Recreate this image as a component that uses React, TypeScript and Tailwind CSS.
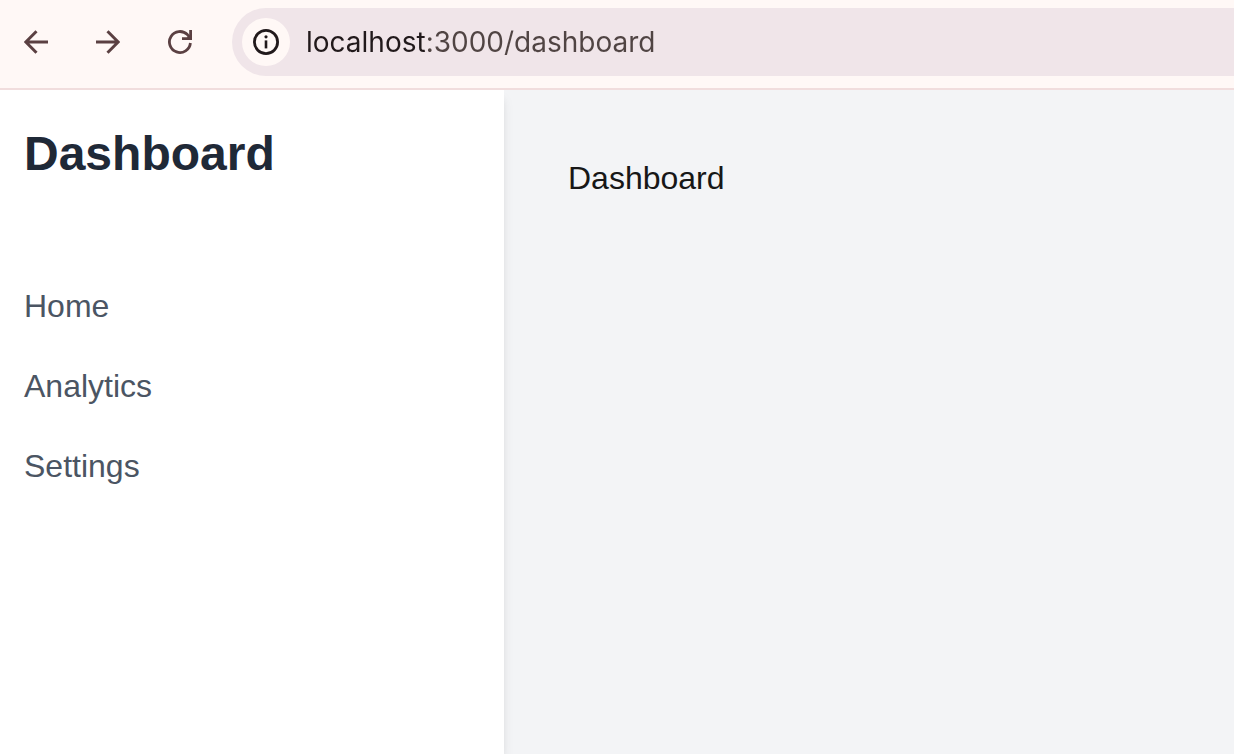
import { useState } from "react";

const links = [
  { label: "Home", href: "#home" },
  { label: "Analytics", href: "#analytics" },
  { label: "Settings", href: "#settings" },
];

function BackIcon() {
  return (
    <svg viewBox="0 0 24 24" className="size-6" fill="none" stroke="currentColor" strokeWidth="3" aria-hidden="true">
      <path d="M24 12H2M12.5 1.2L1.8 12L12.5 22.8" />
    </svg>
  );
}

function ForwardIcon() {
  return (
    <svg viewBox="0 0 24 24" className="size-6" fill="none" stroke="currentColor" strokeWidth="3" aria-hidden="true">
      <path d="M0 12H22M11.5 1.2L22.2 12L11.5 22.8" />
    </svg>
  );
}

function ReloadIcon() {
  return (
    <svg viewBox="0 0 24 24" className="size-6" fill="none" stroke="currentColor" strokeWidth="2.8" aria-hidden="true">
      <path d="M22.4 13A10.5 10.5 0 1 1 19.4 4.6L22 7.6" />
      <path d="M22.6 0V8.6H14" />
      <path d="M22.6 4.5V8.6H18Z" fill="currentColor" stroke="none" />
    </svg>
  );
}

function InfoIcon() {
  return (
    <svg viewBox="0 0 26 26" className="size-[26px]" fill="none" stroke="currentColor" strokeWidth="2.8" aria-hidden="true">
      <circle cx="13" cy="13" r="11.6" />
      <path d="M13 11.4V19.4" strokeWidth="2.6" />
      <circle cx="13" cy="7.8" r="1.6" fill="currentColor" stroke="none" />
    </svg>
  );
}

function BrowserBar() {
  const [address, setAddress] = useState("localhost:3000/dashboard");
  const button = "flex h-12 w-[72px] shrink-0 items-center justify-center text-[#5b4042]";
  return (
    <header className="flex items-center border-b-2 border-[#f1dddd] bg-[#fff8f6] pt-2 pb-3">
      <button type="button" aria-label="Back" className={button}>
        <BackIcon />
      </button>
      <button type="button" aria-label="Forward" className={button}>
        <ForwardIcon />
      </button>
      <button type="button" aria-label="Reload" className={button}>
        <ReloadIcon />
      </button>
      <div className="ml-4 flex h-[68px] min-w-0 flex-1 items-center gap-4 rounded-l-full bg-[#f0e5e9] pl-[10px]">
        <button
          type="button"
          aria-label="Site information"
          className="flex size-12 shrink-0 items-center justify-center rounded-full bg-[#fff8f6] text-[#21191b]"
        >
          <InfoIcon />
        </button>
        <input
          type="text"
          aria-label="Address"
          value={address}
          onChange={(event) => setAddress(event.target.value)}
          className="h-12 min-w-0 flex-1 bg-[linear-gradient(to_right,#21191b_120px,#504443_120px)] bg-clip-text font-[Inter,sans-serif] text-[28px] text-transparent caret-[#21191b] outline-none"
        />
      </div>
    </header>
  );
}

export default function App() {
  return (
    <div className="flex min-h-screen flex-col font-['Liberation_Sans',Arial,sans-serif]">
      <BrowserBar />
      <div className="flex flex-1 overflow-hidden bg-[#f3f4f6]">
        <aside className="w-[504px] shrink-0 bg-white px-6 pt-8 shadow-[0_8px_12px_-2px_rgba(0,0,0,0.1),0_4px_8px_-4px_rgba(0,0,0,0.1)]">
          <h1 className="text-5xl leading-16 font-bold text-[#1f2937]">Dashboard</h1>
          <nav className="mt-24 flex flex-col gap-8">
            {links.map((link) => (
              <a key={link.label} href={link.href} className="text-[32px] leading-12 text-[#4b5563]">
                {link.label}
              </a>
            ))}
          </nav>
        </aside>
        <main className="min-w-0 flex-1 p-16">
          <p className="text-[32px] leading-12 text-[#171717]">Dashboard</p>
        </main>
      </div>
    </div>
  );
}
